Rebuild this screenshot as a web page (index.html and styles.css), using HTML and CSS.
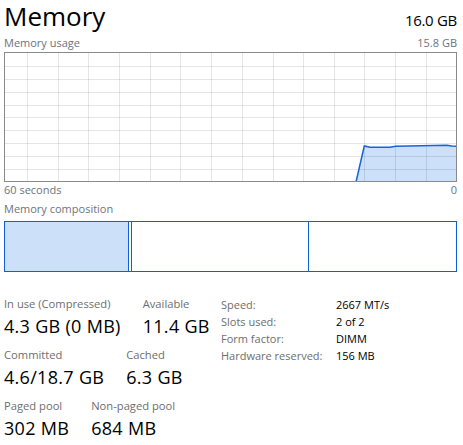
FILE: index.html
```html
<!DOCTYPE html>
<html>
<head>
<meta charset="utf-8">
<link rel="stylesheet" href="styles.css">
</head>
<body>
<div class="page">
  <div class="header">
    <span class="title">Memory</span>
    <span class="total">16.0 GB</span>
  </div>
  <div class="caption-row caption-top">
    <span>Memory usage</span>
    <span>15.8 GB</span>
  </div>
  <svg class="graph" width="453" height="130" viewBox="0 0 453 130">
    <rect x="0" y="0" width="453" height="130" fill="#ffffff"/>
    <polygon points="352,129.5 360.3,94 366,95.3 386,95.3 391.7,94.3 442.7,93.3 447.7,94 453,94.3 453,129.5" fill="#cce0fa"/>
    <g stroke="rgba(0,0,0,0.1)" stroke-width="1">
      <line x1="23.5" y1="0" x2="23.5" y2="130"/>
      <line x1="54.5" y1="0" x2="54.5" y2="130"/>
      <line x1="84.5" y1="0" x2="84.5" y2="130"/>
      <line x1="115.5" y1="0" x2="115.5" y2="130"/>
      <line x1="146.5" y1="0" x2="146.5" y2="130"/>
      <line x1="176.5" y1="0" x2="176.5" y2="130"/>
      <line x1="207.5" y1="0" x2="207.5" y2="130"/>
      <line x1="238.5" y1="0" x2="238.5" y2="130"/>
      <line x1="269.5" y1="0" x2="269.5" y2="130"/>
      <line x1="299.5" y1="0" x2="299.5" y2="130"/>
      <line x1="330.5" y1="0" x2="330.5" y2="130"/>
      <line x1="360.5" y1="0" x2="360.5" y2="130"/>
      <line x1="391.5" y1="0" x2="391.5" y2="130"/>
      <line x1="422.5" y1="0" x2="422.5" y2="130"/>
      <line x1="0" y1="14.5" x2="453" y2="14.5"/>
      <line x1="0" y1="27.5" x2="453" y2="27.5"/>
      <line x1="0" y1="40.5" x2="453" y2="40.5"/>
      <line x1="0" y1="53.5" x2="453" y2="53.5"/>
      <line x1="0" y1="65.5" x2="453" y2="65.5"/>
      <line x1="0" y1="78.5" x2="453" y2="78.5"/>
      <line x1="0" y1="91.5" x2="453" y2="91.5"/>
      <line x1="0" y1="104.5" x2="453" y2="104.5"/>
      <line x1="0" y1="117.5" x2="453" y2="117.5"/>
    </g>
    <polyline points="352,130 360.3,94 366,95.3 386,95.3 391.7,94.3 442.7,93.3 447.7,94 453,94.3" fill="none" stroke="#1565d8" stroke-width="1.5"/>
    <rect x="0.5" y="0.5" width="452" height="129" fill="none" stroke="#8a8a8a" stroke-width="1"/>
  </svg>
  <div class="caption-row">
    <span>60 seconds</span>
    <span>0</span>
  </div>
  <div class="caption-row caption-comp">
    <span>Memory composition</span>
  </div>
  <div class="composition">
    <div class="seg seg-inuse"></div>
    <div class="seg seg-modified"></div>
    <div class="seg seg-standby"></div>
    <div class="seg seg-free"></div>
  </div>
  <div class="details">
    <div class="stats">
      <div class="stat-row">
        <div class="stat"><div class="stat-label">In use (Compressed)</div><div class="stat-value">4.3 GB (0 MB)</div></div>
        <div class="stat"><div class="stat-label">Available</div><div class="stat-value">11.4 GB</div></div>
      </div>
      <div class="stat-row">
        <div class="stat"><div class="stat-label">Committed</div><div class="stat-value">4.6/18.7 GB</div></div>
        <div class="stat"><div class="stat-label">Cached</div><div class="stat-value">6.3 GB</div></div>
      </div>
      <div class="stat-row">
        <div class="stat"><div class="stat-label">Paged pool</div><div class="stat-value">302 MB</div></div>
        <div class="stat"><div class="stat-label">Non-paged pool</div><div class="stat-value">684 MB</div></div>
      </div>
    </div>
    <div class="props">
      <div class="prop-label">Speed:</div><div class="prop-value">2667 MT/s</div>
      <div class="prop-label">Slots used:</div><div class="prop-value">2 of 2</div>
      <div class="prop-label">Form factor:</div><div class="prop-value">DIMM</div>
      <div class="prop-label">Hardware reserved:</div><div class="prop-value">156 MB</div>
    </div>
  </div>
</div>
</body>
</html>
```
FILE: styles.css
```css
html, body {
  margin: 0;
  padding: 0;
  background: #ffffff;
}
body {
  font-family: "Open Sans", "Noto Sans", sans-serif;
  color: #000000;
}
.page {
  width: 453px;
  padding: 0 6px 0 4px;
}
.header {
  display: flex;
  justify-content: space-between;
  align-items: baseline;
  height: 31px;
  line-height: 32px;
}
.title {
  font-size: 26px;
}
.total {
  font-size: 15px;
  letter-spacing: -0.3px;
}
.caption-row {
  display: flex;
  justify-content: space-between;
  height: 16px;
  line-height: 16px;
  font-size: 11px;
  color: #6c7480;
}
.caption-top {
  margin-top: 4px;
  margin-bottom: 1px;
}
.graph {
  display: block;
}
.caption-comp {
  margin-top: 3px;
}
.composition {
  display: flex;
  height: 51px;
  margin-top: 4px;
}
.seg {
  box-sizing: border-box;
  height: 51px;
  border-top: 1px solid #0f5fd8;
  border-bottom: 1px solid #0f5fd8;
}
.seg-inuse {
  width: 125px;
  background: #cce0fa;
  border-left: 1px solid #0f5fd8;
  border-right: 1px solid #0f5fd8;
}
.seg-modified {
  width: 2px;
}
.seg-standby {
  width: 178px;
  border-left: 1px solid #0f5fd8;
  border-right: 1px solid #0f5fd8;
}
.seg-free {
  width: 148px;
  border-right: 1px solid #0f5fd8;
}
.details {
  display: flex;
  margin-top: 24px;
}
.stats {
  width: 217px;
  display: flex;
  flex-direction: column;
  gap: 10px;
}
.stat-row {
  display: flex;
  gap: 22px;
}
.stat-label {
  font-size: 11.2px;
  line-height: 16px;
  color: #6e6e6e;
}
.stat-value {
  margin-top: 3px;
  font-size: 18px;
  letter-spacing: 0.3px;
  line-height: 22px;
}
.props {
  display: grid;
  grid-template-columns: 115px auto;
  grid-auto-rows: 17px;
  font-size: 11px;
  line-height: 17px;
}
.prop-label {
  color: #6e6e6e;
}
.prop-value {
  color: #000000;
}
```
